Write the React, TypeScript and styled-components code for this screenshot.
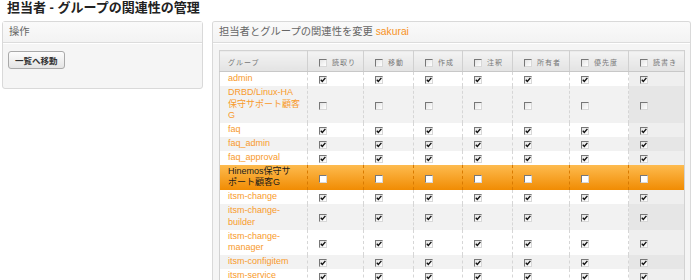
import React from 'react';
import styled, { createGlobalStyle } from 'styled-components';

// Permission columns and their widths (first width is the group column)
const permissions = ['読取り', '移動', '作成', '注釈', '所有者', '優先度', '読書き'];
const colWidths = [88, 56, 50, 49, 50, 57, 59, 56];

interface GroupRow {
  lines: string[];
  checked: boolean;
  selected?: boolean;
}

const groups: GroupRow[] = [
  { lines: ['admin'], checked: true },
  { lines: ['DRBD/Linux-HA', '保守サポート顧客', 'G'], checked: false },
  { lines: ['faq'], checked: true },
  { lines: ['faq_admin'], checked: true },
  { lines: ['faq_approval'], checked: true },
  { lines: ['Hinemos保守サ', 'ポート顧客G'], checked: false, selected: true },
  { lines: ['itsm-change'], checked: true },
  { lines: ['itsm-change-', 'builder'], checked: true },
  { lines: ['itsm-change-', 'manager'], checked: true },
  { lines: ['itsm-configitem'], checked: true },
  { lines: ['itsm-service'], checked: true },
];

const CheckBox: React.FC<{ checked?: boolean; light?: boolean }> = ({ checked, light }) => (
  <Box $light={light}>
    {checked && (
      <svg width="6" height="6" viewBox="0 0 6 6">
        <path d="M0.8 2.8 L2.3 4.4 L5.4 0.9" stroke="#111" strokeWidth="1.4" fill="none" />
      </svg>
    )}
  </Box>
);

const App: React.FC = () => {
  return (
    <Page>
      <GlobalStyle />
      <Title>担当者 - グループの関連性の管理</Title>
      <Columns>
        <Sidebar>
          <PanelHeader>操作</PanelHeader>
          <SidebarBody>
            <Button>一覧へ移動</Button>
          </SidebarBody>
        </Sidebar>
        <Main>
          <PanelHeader>
            担当者とグループの関連性を変更 <Accent>sakurai</Accent>
          </PanelHeader>
          <MainBody>
            <Table>
              <colgroup>
                {colWidths.map((w, i) => (
                  <col key={i} style={{ width: w }} />
                ))}
              </colgroup>
              <thead>
                <tr>
                  <HeadCell $first>グループ</HeadCell>
                  {permissions.map(p => (
                    <HeadCell key={p}>
                      <HeadInner>
                        <CheckBox />
                        <span>{p}</span>
                      </HeadInner>
                    </HeadCell>
                  ))}
                </tr>
              </thead>
              <tbody>
                {groups.map((g, r) => (
                  <Row key={r} $odd={r % 2 === 1} $selected={g.selected}>
                    <NameCell $selected={g.selected}>
                      {g.lines.map((l, i) => (
                        <React.Fragment key={i}>
                          {i > 0 && <br />}
                          {l}
                        </React.Fragment>
                      ))}
                    </NameCell>
                    {permissions.map((p, c) => (
                      <Cell key={p} $last={c === permissions.length - 1} $odd={r % 2 === 1} $selected={g.selected}>
                        <CheckBox checked={g.checked} light={g.selected} />
                      </Cell>
                    ))}
                  </Row>
                ))}
              </tbody>
            </Table>
          </MainBody>
        </Main>
      </Columns>
    </Page>
  );
};

const GlobalStyle = createGlobalStyle`
  html, body {
    margin: 0;
    padding: 0;
    background: #fff;
    overflow: hidden;
  }
  body {
    font-family: "Liberation Sans", "Noto Sans CJK JP", sans-serif;
    color: #333;
  }
`;

const Page = styled.div`
  padding: 0 7px 0 2px;
`;

const Title = styled.h1`
  margin: 0;
  padding: 0 0 5px 5px;
  font-size: 13px;
  line-height: 16px;
  font-weight: bold;
  color: #222;
`;

const Columns = styled.div`
  display: flex;
  align-items: flex-start;
  gap: 9px;
`;

const Panel = styled.div`
  border: 1px solid #d9d9d9;
  border-radius: 3px;
  background: #f5f5f5;
`;

const Sidebar = styled(Panel)`
  width: 201px;
  box-sizing: border-box;
`;

const Main = styled(Panel)`
  flex: 1;
  height: 258px;
  border-bottom: none;
  border-radius: 3px 3px 0 0;
  overflow: hidden;
`;

const PanelHeader = styled.div`
  height: 20px;
  line-height: 20px;
  padding: 0 6px;
  font-size: 10.3px;
  color: #666;
  background: linear-gradient(#fafafa, #f3f3f3);
  border-bottom: 1px solid #dcdcdc;
  box-shadow: 0 1px 0 #fff;
`;

const Accent = styled.span`
  color: #f7931e;
`;

const SidebarBody = styled.div`
  padding: 7px 5px 19px;
`;

const Button = styled.button`
  height: 18px;
  padding: 0 6px;
  border: 1px solid #a9a9a9;
  border-radius: 3px;
  background: linear-gradient(#fcfcfc, #e4e4e4);
  font-family: "Liberation Sans", "Noto Sans CJK JP", sans-serif;
  font-size: 8.5px;
  font-weight: bold;
  color: #333;
  cursor: pointer;
`;

const MainBody = styled.div`
  padding: 7px 6px;
`;

const Table = styled.table`
  width: 465px;
  table-layout: fixed;
  border-collapse: collapse;
  border: 1px solid #d2d2d2;
  background: #fff;
`;

const HeadCell = styled.th<{ $first?: boolean }>`
  height: 17px;
  padding: 3px 0 0 ${p => (p.$first ? '8px' : '11px')};
  text-align: left;
  vertical-align: middle;
  font-size: 7px;
  line-height: 10px;
  letter-spacing: 1px;
  font-weight: normal;
  color: #777;
  background: linear-gradient(#f3f3f3, #e3e3e3);
  border-right: 1px solid #d0d0d0;
  border-bottom: 1px solid #c8c8c8;
  white-space: nowrap;
`;

const HeadInner = styled.div`
  display: flex;
  align-items: center;
  gap: 5px;
`;

const Row = styled.tr<{ $odd: boolean; $selected?: boolean }>`
  background: ${p =>
    p.$selected ? 'linear-gradient(#fdbb4f, #f08a00)' : p.$odd ? '#f2f2f2' : '#fff'};
`;

const NameCell = styled.td<{ $selected?: boolean }>`
  padding: 1px 2px 1px 8px;
  font-size: 9px;
  line-height: 11.8px;
  color: ${p => (p.$selected ? '#1a1a1a' : '#f89a2c')};
  border-right: 1px dashed ${p => (p.$selected ? '#d97a00' : '#d6d6d6')};
  vertical-align: middle;
`;

const Cell = styled.td<{ $last?: boolean; $odd: boolean; $selected?: boolean }>`
  padding: 1px 0 1px 11px;
  line-height: 11px;
  vertical-align: middle;
  border-right: 1px dashed ${p => (p.$selected ? '#d97a00' : '#d6d6d6')};
  background: ${p =>
    p.$last && !p.$selected ? (p.$odd ? '#e6e6e6' : '#efefef') : 'transparent'};
`;

const Box = styled.span<{ $light?: boolean }>`
  display: inline-flex;
  align-items: center;
  justify-content: center;
  width: 8px;
  height: 8px;
  box-sizing: border-box;
  border: 1px solid;
  border-color: #777 #d8d8d8 #d8d8d8 #777;
  background: ${p => (p.$light ? '#fff' : 'linear-gradient(135deg, #e4e4e4, #fff)')};
  vertical-align: middle;
`;

export default App;
